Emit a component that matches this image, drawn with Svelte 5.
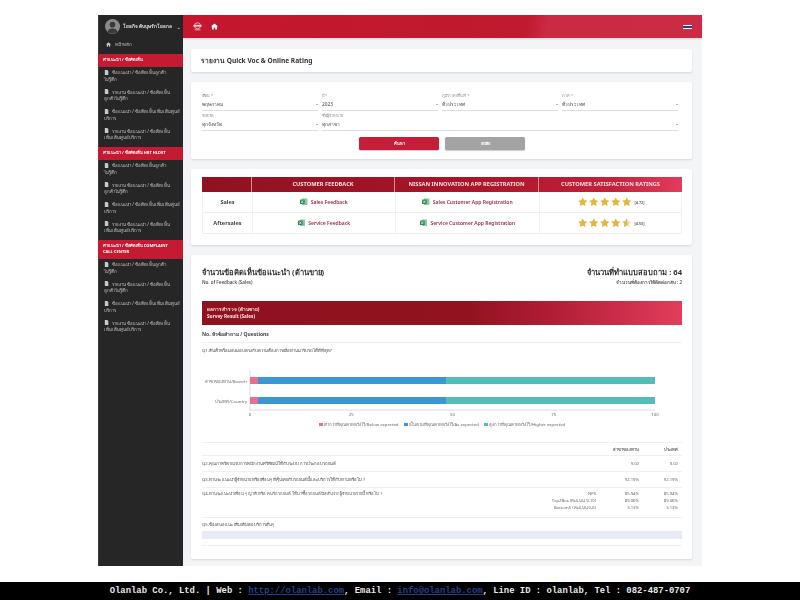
<script>
  const sections = [
    {
      title: "คำแนะนำ / ข้อคิดเห็น",
      items: [
        ["ข้อแนะนำ / ข้อคิดเห็นลูกค้า", "ไม่รู้สึก"],
        ["รายงาน ข้อแนะนำ / ข้อคิดเห็น", "ลูกค้าไม่รู้สึก"],
        ["ข้อแนะนำ / ข้อคิดเห็นเพิ่มเติมศูนย์", "บริการ"],
        ["รายงาน ข้อแนะนำ / ข้อคิดเห็น", "เพิ่มเติมศูนย์บริการ"],
      ],
    },
    {
      title: "คำแนะนำ / ข้อคิดเห็น HRT HLDST",
      items: [
        ["ข้อแนะนำ / ข้อคิดเห็นลูกค้า", "ไม่รู้สึก"],
        ["รายงาน ข้อแนะนำ / ข้อคิดเห็น", "ลูกค้าไม่รู้สึก"],
        ["ข้อแนะนำ / ข้อคิดเห็นเพิ่มเติมศูนย์", "บริการ"],
        ["รายงาน ข้อแนะนำ / ข้อคิดเห็น", "เพิ่มเติมศูนย์บริการ"],
      ],
    },
    {
      title: "คำแนะนำ / ข้อคิดเห็น COMPLAINT CALL CENTER",
      items: [
        ["ข้อแนะนำ / ข้อคิดเห็นลูกค้า", "ไม่รู้สึก"],
        ["รายงาน ข้อแนะนำ / ข้อคิดเห็น", "ลูกค้าไม่รู้สึก"],
        ["ข้อแนะนำ / ข้อคิดเห็นเพิ่มเติมศูนย์", "บริการ"],
        ["รายงาน ข้อแนะนำ / ข้อคิดเห็น", "เพิ่มเติมศูนย์บริการ"],
      ],
    },
  ];

  const feedback = [
    { name: "Sales", link: "Sales Feedback", app: "Sales Customer App Registration", score: "[4.72]", last: 1 },
    { name: "Aftersales", link: "Service Feedback", app: "Service Customer App Registration", score: "[4.53]", last: 0.55 },
  ];

  const star = "M5 .4l1.45 3 3.3.45-2.4 2.3.6 3.3L5 7.85 2.05 9.45l.6-3.3-2.4-2.3 3.3-.45z";
  const ticks = [0, 25, 50, 75, 100];
  const bars = [
    { label: "สาขาของท่าน/Branch", y: 7 },
    { label: "ประเทศ/Country", y: 27 },
  ];
  const x = (pct) => 48 + pct * 4.05;
</script>

{#snippet excel()}
  <svg class="xls" viewBox="0 0 8 8">
    <rect x="2" y="0.5" width="6" height="7" rx="0.6" fill="#8fc7a0" />
    <rect x="0" y="1.5" width="5" height="5" rx="0.5" fill="#2e8b57" />
    <path d="M1.3 2.7l2.2 2.6M3.5 2.7L1.3 5.3" stroke="#fff" stroke-width="0.7" />
  </svg>
{/snippet}

{#snippet doc()}
  <svg class="ico" viewBox="0 0 6 6"><path d="M1 0h3l1.2 1.3V6H1z" fill="#c9c9c9" /></svg>
{/snippet}

<div class="page">
  <div class="shell">
    <aside class="sidebar">
      <div class="user">
        <svg class="avatar" viewBox="0 0 16 16">
          <circle cx="8" cy="8" r="8" fill="#8b8b8b" />
          <circle cx="8" cy="6" r="3" fill="#3a3a3a" />
          <path d="M2.6 13.6a5.6 4.6 0 0 1 10.8 0A8 8 0 0 1 2.6 13.6z" fill="#3a3a3a" />
        </svg>
        <span class="uname">โยธกิจ ดับบุษรักโยธกล</span>
        <span class="caret">⌄</span>
      </div>
      <div class="home">
        <svg class="ico" viewBox="0 0 6 6"><path d="M3 .4L6 3H5v2.6H3.6V4H2.4v1.6H1V3H0z" fill="#c9c9c9" /></svg>
        หน้าหลัก
      </div>
      <nav class="nav">
        {#each sections as section}
          <div class="section">{section.title}</div>
          {#each section.items as item}
            <div class="item">
              <span class="first">{@render doc()}{item[0]}</span>
              <span>{item[1]}</span>
            </div>
          {/each}
        {/each}
      </nav>
    </aside>

    <div class="main">
      <header class="topbar">
        <svg class="logo" viewBox="0 0 12 12">
          <circle cx="6" cy="5" r="4" fill="none" stroke="#f4d5da" stroke-width="1" />
          <rect x="0.5" y="3.8" width="11" height="2.4" fill="#f4d5da" />
          <rect x="2" y="10" width="8" height="1" fill="#f4d5da" />
        </svg>
        <svg class="homeicon" viewBox="0 0 10 10"><path d="M5 .8L10 5H8.6v4.2H6V6.4H4v2.8H1.4V5H0z" fill="#fff" /></svg>
        <svg class="flag" viewBox="0 0 9 6">
          <rect width="9" height="6" fill="#f4f4f4" />
          <rect width="9" height="1" fill="#c8344a" />
          <rect y="5" width="9" height="1" fill="#c8344a" />
          <rect y="2" width="9" height="2" fill="#2f3a78" />
        </svg>
      </header>

      <div class="content">
        <section class="card title-card">รายงาน Quick Voc &amp; Online Rating</section>

        <section class="card filters">
          <div class="fields">
            <div class="field"><label>เดือน *</label><div class="select"><span>พฤษภาคม</span><i></i></div></div>
            <div class="field"><label>ปี *</label><div class="select"><span>2023</span><i></i></div></div>
            <div class="field"><label>ภูมิภาค/พื้นที่ *</label><div class="select"><span>ทั่วประเทศ</span><i></i></div></div>
            <div class="field"><label>ภาค *</label><div class="select"><span>ทั่วประเทศ</span><i></i></div></div>
            <div class="field"><label>จังหวัด</label><div class="select"><span>ทุกจังหวัด</span><i></i></div></div>
            <div class="field wide"><label>ชื่อผู้จำหน่าย</label><div class="select"><span>ทุกสาขา</span><i></i></div></div>
          </div>
          <div class="buttons">
            <button class="btn red">ค้นหา</button>
            <button class="btn gray">ยกเลิก</button>
          </div>
        </section>

        <section class="card links">
          <div class="grid head">
            <div></div>
            <div>CUSTOMER FEEDBACK</div>
            <div>NISSAN INNOVATION APP REGISTRATION</div>
            <div>CUSTOMER SATISFACTION RATINGS</div>
          </div>
          {#each feedback as row}
            <div class="grid row">
              <div class="rowname">{row.name}</div>
              <div class="cell">{@render excel()}<a href="#top">{row.link}</a></div>
              <div class="cell">{@render excel()}<a href="#top">{row.app}</a></div>
              <div class="cell stars">
                {#each [1, 1, 1, 1, row.last] as fill}
                  <svg class="star" viewBox="0 0 10 10">
                    <path d={star} fill="#e3dcc4" />
                    <path d={star} fill="#e6b63c" style="clip-path: inset(0 {(1 - fill) * 100}% 0 0)" />
                  </svg>
                {/each}
                <span class="score">{row.score}</span>
              </div>
            </div>
          {/each}
        </section>

        <section class="card result">
          <div class="result-head">
            <div>
              <h2>จำนวนข้อคิดเห็นข้อแนะนำ (ด้านขาย)</h2>
              <p>No. of Feedback (Sales)</p>
            </div>
            <div class="right">
              <h2>จำนวนที่ทำแบบสอบถาม : 64</h2>
              <p>จำนวนที่ต้องการให้ติดต่อกลับ : 2</p>
            </div>
          </div>

          <div class="banner">
            <div>ผลการสำรวจ (ด้านขาย)</div>
            <div>Survey Result (Sales)</div>
          </div>

          <div class="qhead">No. หัวข้อคำถาม / Questions</div>
          <div class="q1">Q1.สินค้าพร้อมส่งมอบตรงกับความต้องการเมื่อท่านมารับรถได้ดีที่สุด?</div>

          <svg class="chart" viewBox="0 0 480 48" width="480" height="48">
            <line x1="48" x2="48" y1="0" y2="41" stroke="#dcdcdc" stroke-width="1" />
            <line x1="48" x2="453" y1="40" y2="40" stroke="#dcdcdc" stroke-width="1" />
            {#each ticks as t}
              <text class="tick" x={x(t)} y="46" text-anchor="middle">{t}</text>
            {/each}
            {#each bars as b}
              <text class="tick" x="45" y={b.y + 5.5} text-anchor="end">{b.label}</text>
              <rect x="48" y={b.y} width="8" height="7" fill="#e8708c" />
              <rect x="56" y={b.y} width="188" height="7" fill="#3b97d3" />
              <rect x="244" y={b.y} width="209" height="7" fill="#55bdb8" />
            {/each}
          </svg>

          <div class="legend">
            <span><b class="pink"></b>ต่ำกว่าที่คุณคาดหวังไว้/Below expected</span>
            <span><b class="blue"></b>เป็นตามที่คุณคาดหวังไว้/As expected</span>
            <span><b class="teal"></b>สูงกว่าที่คุณคาดหวังไว้/Higher expected</span>
          </div>

          <div class="scores">
            <div class="sline thead"><span></span><span></span><span class="num">สาขาของท่าน</span><span class="num">ประเทศ</span></div>
            <div class="sline"><span>Q2.คุณภาพรีพาเนรบการพนักงานศรีพัฒน์ให้กับระบบ การประกอบรถยนต์</span><span></span><span class="num">9.02</span><span class="num">9.02</span></div>
            <div class="sline"><span>Q3.ท่านจะ แนะนำผู้จำหน่าย หรือเพื่อนๆ ที่คุ้นเคยกับรถยนต์นี้และบริการให้กับท่านหรือไม่ ?</span><span></span><span class="num">92.19%</span><span class="num">92.19%</span></div>
            <div class="sline tall">
              <span>Q4.ท่านจะแนะนำเพื่อน ๆ ญาติ หรือ คนรักรถยนต์ ให้มาซื้อรถยนต์นิสสันจากผู้จำหน่ายรายนี้ หรือไม่ ?</span>
              <span class="num">NPS<br />Top2Box (คะแนน 9-10)<br />Bottom5 (คะแนน 0-6)</span>
              <span class="num">85.94%<br />89.06%<br />3.13%</span>
              <span class="num">85.94%<br />89.06%<br />3.13%</span>
            </div>
            <div class="comment">Q5.ข้อเสนอแนะ เพิ่มเติมต่อบริการอื่นๆ</div>
            <div class="fillbar"></div>
          </div>
        </section>
      </div>
    </div>
  </div>

  <footer class="footer">
    Olanlab Co., Ltd. | Web : <a href="#top">http://olanlab.com</a>, Email : <a href="#top">info@olanlab.com</a>, Line ID : olanlab, Tel : 082-487-0707
  </footer>
</div>

<style>
  :global(body) {
    margin: 0;
    background: #fff;
  }

  .page {
    height: 600px;
    display: flex;
    flex-direction: column;
    font-family: "Noto Sans", "Liberation Sans", sans-serif;
    color: #3a3a3a;
    overflow: hidden;
  }

  .shell {
    width: 604px;
    height: 551px;
    margin: 15px auto 0;
    display: flex;
    filter: blur(0.35px);
  }

  .footer {
    margin-top: auto;
    height: 18px;
    line-height: 18px;
    background: #000;
    color: #e8e8e8;
    font-family: "Liberation Mono", monospace;
    font-weight: 700;
    font-size: 8.9px;
    text-align: center;
    white-space: nowrap;
  }

  .footer a {
    color: #24418f;
  }

  /* sidebar */
  .sidebar {
    width: 85px;
    flex: none;
    background: #262626;
    color: #c4c4c4;
    font-size: 4.4px;
    box-shadow: inset 1px 0 #3a3a3a;
  }

  .user {
    height: 23px;
    display: flex;
    align-items: center;
    padding: 0 0 0 7px;
    gap: 3px;
    font-weight: 700;
    color: #e4e4e4;
  }

  .avatar {
    width: 15px;
    height: 15px;
  }

  .uname {
    font-size: 4.7px;
  }

  .caret {
    margin-left: 2px;
  }

  .home {
    height: 12px;
    padding-left: 8px;
    display: flex;
    align-items: center;
    gap: 4px;
  }

  .ico {
    width: 5px;
    height: 5px;
    flex: none;
  }

  .nav {
    height: 278px;
    margin-top: 4px;
    overflow: hidden;
  }

  .section {
    background: #c41a32;
    color: #fff;
    font-weight: 700;
    font-size: 4px;
    line-height: 6px;
    padding: 3.25px 5px;
    margin-bottom: 2.5px;
  }

  .item {
    display: flex;
    flex-direction: column;
    padding: 0 6px 6.5px;
    line-height: 6.5px;
    white-space: nowrap;
  }

  .first {
    display: flex;
    align-items: center;
    gap: 3px;
  }

  /* top bar and cards */
  .main {
    flex: 1;
    display: flex;
    flex-direction: column;
    background: #f3f4f6;
    min-width: 0;
  }

  .topbar {
    height: 23px;
    flex: none;
    display: flex;
    align-items: center;
    padding: 0 10px;
    background: linear-gradient(102deg, #c4172d 0%, #bf1a2f 66%, #cb2a44 70%, #cc2b45 100%);
    box-shadow: 0 1px 2px #0002;
  }

  .logo {
    width: 9px;
    height: 9px;
  }

  .homeicon {
    width: 7px;
    height: 7px;
    margin-left: 9px;
  }

  .flag {
    width: 9px;
    height: 6px;
    margin-left: auto;
  }

  .content {
    padding: 11px 10px 7px 8px;
    display: flex;
    flex-direction: column;
    gap: 10px;
    flex: 1;
  }

  .card {
    background: #fff;
    border-radius: 2px;
    box-shadow: 0 1px 2px #0000001f;
  }

  .title-card {
    height: 23px;
    line-height: 23px;
    padding-left: 10px;
    font-size: 6.6px;
    font-weight: 700;
    color: #333;
  }

  /* filters */
  .filters {
    height: 77px;
    box-sizing: border-box;
    padding: 11px 14px 0 11px;
  }

  .fields {
    display: grid;
    grid-template-columns: repeat(4, 1fr);
    column-gap: 4px;
    row-gap: 2px;
  }

  .wide {
    grid-column: span 3;
  }

  .field label {
    display: block;
    font-size: 3.8px;
    line-height: 5px;
    color: #8a8a8a;
  }

  .select {
    display: flex;
    justify-content: space-between;
    align-items: center;
    height: 12px;
    font-size: 4.8px;
    border-bottom: 1px solid #ddd;
    color: #444;
  }

  .select i {
    width: 0;
    height: 0;
    border: 1.2px solid transparent;
    border-top: 1.5px solid #777;
    margin-top: 1px;
  }

  .buttons {
    display: flex;
    justify-content: center;
    gap: 6px;
    margin-top: 6px;
    padding-left: 4px;
  }

  .btn {
    width: 80px;
    height: 13px;
    padding: 0;
    border: 0;
    border-radius: 1.5px;
    color: #fff;
    font: 700 4px "Noto Sans", sans-serif;
    box-shadow: 0 1px 1px #0003;
  }

  .red {
    background: #c41e38;
  }

  .gray {
    background: #a3a3a3;
  }

  /* links table */
  .links {
    height: 76px;
    box-sizing: border-box;
    padding: 8px 10px 0 11px;
  }

  .grid {
    display: grid;
    grid-template-columns: 49px 143px 144px 144px;
  }

  .head {
    height: 15px;
    background: linear-gradient(90deg, #8f1220 0%, #a81528 55%, #c32139 85%, #e23d5c 100%);
    color: #f6dfe3;
    font-size: 5.7px;
    font-weight: 700;
    line-height: 15px;
    text-align: center;
    white-space: nowrap;
  }

  .head > div + div {
    border-left: 1px solid #d68a94;
  }

  .row {
    height: 20px;
    border-bottom: 1px solid #eee;
    border-left: 1px solid #f2f2f2;
    border-right: 1px solid #f2f2f2;
    font-size: 5px;
  }

  .row > div {
    display: flex;
    justify-content: center;
    align-items: center;
    gap: 3px;
  }

  .row > div + div {
    border-left: 1px solid #f0f0f0;
  }

  .rowname {
    font-size: 5.6px;
    font-weight: 700;
    color: #444;
  }

  .cell a {
    color: #9c2a40;
    text-decoration: none;
    font-weight: 600;
  }

  .xls {
    width: 7.5px;
    height: 7.5px;
  }

  .stars.stars {
    gap: 1.5px;
  }

  .star {
    width: 9.5px;
    height: 9.5px;
  }

  .score {
    font-size: 3.8px;
    font-weight: 600;
    margin-left: 1px;
    color: #555;
  }

  /* result card */
  .result {
    flex: 1;
    padding: 0 10px 0 11px;
  }

  .result-head {
    display: flex;
    justify-content: space-between;
    padding-top: 11px;
    height: 35px;
  }

  .result-head h2 {
    margin: 0;
    font-size: 7.6px;
    line-height: 12px;
    color: #333;
  }

  .result-head p {
    margin: 1px 0 0;
    font-size: 4.5px;
    line-height: 7px;
    color: #555;
    font-weight: 600;
  }

  .right {
    text-align: right;
  }

  .banner {
    height: 24px;
    box-sizing: border-box;
    padding: 5px 5px 0;
    background: linear-gradient(90deg, #8f1220 0%, #92121f 55%, #b01c34 72%, #e23d5c 100%);
    color: #f9e6e9;
    font-size: 4.7px;
    font-weight: 700;
    line-height: 7px;
  }

  .qhead {
    height: 17px;
    line-height: 18px;
    font-size: 5px;
    font-weight: 700;
    border-bottom: 1px solid #f0f0f0;
    color: #444;
  }

  .q1 {
    font-size: 4.3px;
    line-height: 15px;
    height: 27px;
    color: #444;
  }

  .chart {
    display: block;
  }

  .tick {
    font-size: 4.3px;
    fill: #666;
    font-family: "Noto Sans", sans-serif;
  }

  .legend {
    display: flex;
    justify-content: center;
    gap: 5px;
    margin-top: 3px;
    font-size: 4.3px;
    line-height: 6px;
    color: #666;
  }

  .legend b {
    display: inline-block;
    width: 4px;
    height: 3.5px;
    margin-right: 1.5px;
  }

  .pink {
    background: #e8708c;
  }

  .blue {
    background: #3b97d3;
  }

  .teal {
    background: #55bdb8;
  }

  .scores {
    margin-top: 15px;
    padding-bottom: 6px;
    border-top: 1px solid #f0f0f0;
    border-bottom: 1px solid #f0f0f0;
    font-size: 4.2px;
    color: #444;
  }

  .sline {
    display: grid;
    grid-template-columns: 1fr 100px 43px 39px;
    padding: 3px 4px 2px 0;
    line-height: 7px;
    border-bottom: 1px solid #f0f0f0;
    align-items: center;
  }

  .sline:not(.thead) {
    height: 15px;
    padding: 0 4px 0 0;
  }

  .thead {
    height: 7px;
    font-weight: 600;
  }

  .sline.tall {
    height: 27px;
    align-items: start;
    padding-top: 2px;
    color: #555;
  }

  .num {
    text-align: right;
    color: #666;
  }

  .comment {
    line-height: 7px;
    padding-top: 2.5px;
    height: 10.5px;
  }

  .fillbar {
    height: 8px;
    background: #e8ebf5;
  }
</style>
